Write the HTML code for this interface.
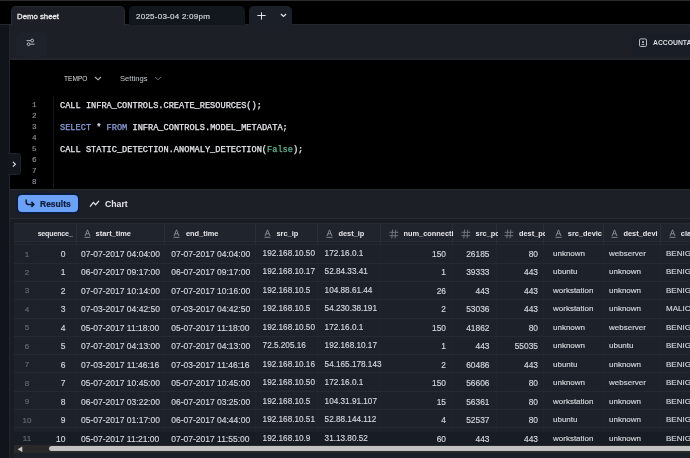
<!DOCTYPE html>
<html><head><meta charset="utf-8">
<style>
*{box-sizing:border-box;margin:0;padding:0}
html,body{width:690px;height:458px;overflow:hidden;background:#000;will-change:transform;font-family:"Liberation Sans",sans-serif;color:#d6d8dc;position:relative}
.a{position:absolute;white-space:pre}
.mono{font-family:"Liberation Mono",monospace}
.ln{position:absolute;left:24px;width:12.5px;text-align:right;font-size:7.6px;color:#8d929a;-webkit-text-stroke:0.15px currentColor;font-family:"Liberation Mono",monospace;line-height:11px}
.code{position:absolute;left:60px;font-size:8.65px;color:#e6e8ec;-webkit-text-stroke:0.25px currentColor;white-space:pre;font-family:"Liberation Mono",monospace;line-height:11px}
.kw{color:#8b9fdc}
.gr{color:#5fb896}
.hd{position:absolute;top:227.5px;font-size:7.4px;font-weight:bold;color:#e4e6ea;line-height:14px;white-space:pre}
.cell{position:absolute;white-space:pre;color:#d4d7dc;line-height:12px;-webkit-text-stroke:0.15px currentColor}
.rn{position:absolute;white-space:pre;color:#62676f;font-size:8px;line-height:12px;text-align:center;width:20px;left:17px;margin-top:0.5px;-webkit-text-stroke:0.2px currentColor}
.vsep{position:absolute;width:1px;background:#262a32}
.hsep{position:absolute;height:1px;left:14px;width:676px;background:#252931}
</style></head><body>

<div class="a" style="left:0;top:0;width:690px;height:1px;background:#2c2c2c"></div>
<div class="a" style="left:0;top:24px;width:690px;height:36px;background:#1c1f26;border-top:1px solid #24272e;border-bottom:2px solid #22252b"></div>
<div class="a" style="left:11px;top:6px;width:114px;height:20px;background:#1c1f26;border:1px solid #262a31;border-bottom:none;z-index:1;border-radius:5px 5px 0 0"></div>
<div class="a" style="left:17px;top:11px;font-size:7.8px;line-height:12px;color:#e9eaec;-webkit-text-stroke:0.3px #e9eaec;z-index:2">Demo sheet</div>
<div class="a" style="left:129px;top:6px;width:116px;height:19px;background:#12161d;border-radius:5px 5px 0 0"></div>
<div class="a" style="left:136px;top:10.7px;font-size:8px;letter-spacing:0.25px;line-height:12px;color:#d0d3d8;-webkit-text-stroke:0.2px currentColor">2025-03-04 2:09pm</div>
<div class="a" style="left:249px;top:6px;width:43px;height:18.5px;background:#1b1f27;border-radius:5px 5px 0 0"></div>
<svg class="a" style="left:257px;top:12px" width="9" height="8" viewBox="0 0 9 8"><path d="M4.5 0.3 V7.7 M0.3 3.5 H8.7" stroke="#e2e4e8" stroke-width="1"/></svg>
<svg class="a" style="left:279.5px;top:13px" width="7" height="5" viewBox="0 0 7 5"><path d="M0.9 1 L3.5 3.5 L6.1 1" stroke="#e2e4e8" stroke-width="1.2" fill="none"/></svg>
<div class="a" style="left:0;top:25px;width:10px;height:433px;background:#11151b;border-right:1px solid #20242b"></div>
<div class="a" style="left:16px;top:32px;width:31px;height:25px;background:#1d222b;border-radius:4px"></div>
<svg class="a" style="left:25px;top:38px" width="11" height="9" viewBox="0 0 11 9"><path d="M1.5 2.6 H5.8 M9.5 6.2 H5.2" stroke="#c8cbd0" stroke-width="0.9"/><circle cx="7.2" cy="2.6" r="1.4" stroke="#c8cbd0" stroke-width="0.9" fill="none"/><circle cx="3.6" cy="6.2" r="1.4" stroke="#c8cbd0" stroke-width="0.9" fill="none"/></svg>
<div class="a" style="left:631.5px;top:33px;width:70px;height:22.5px;background:#191d25;border-radius:5px"></div>
<svg class="a" style="left:639px;top:38px" width="8" height="9" viewBox="0 0 8 9"><rect x="0.5" y="0.9" width="7" height="7.6" rx="1.2" stroke="#c9ccd1" stroke-width="0.9" fill="none"/><circle cx="4" cy="3.9" r="1" fill="#c9ccd1"/><path d="M2.2 7 Q4 5.2 5.8 7 Z" fill="#c9ccd1"/></svg>
<div class="a" style="left:653px;top:37px;font-size:6.8px;font-weight:bold;line-height:12px;color:#d8dbe0">ACCOUNTADMIN</div>
<div class="a" style="left:10px;top:60px;width:680px;height:130px;background:#000"></div>
<div class="a" style="left:64px;top:73px;font-size:6.6px;line-height:12px;color:#dcdfe3">TEMPO</div>
<svg class="a" style="left:93.5px;top:76px" width="8" height="5" viewBox="0 0 8 5"><path d="M1 1 L4 3.8 L7 1" stroke="#b0b4bb" stroke-width="1.1" fill="none"/></svg>
<div class="a" style="left:120px;top:73px;font-size:7.6px;line-height:12px;color:#c4c8ce">Settings</div>
<svg class="a" style="left:153.5px;top:76px" width="8" height="5" viewBox="0 0 8 5"><path d="M1 1 L4 3.8 L7 1" stroke="#666c75" stroke-width="1" fill="none"/></svg>
<div class="a" style="left:52.5px;top:96px;width:1px;height:92px;background:#15171b"></div>
<div class="ln" style="top:100px">1</div>
<div class="ln" style="top:111px">2</div>
<div class="ln" style="top:122px">3</div>
<div class="ln" style="top:133px">4</div>
<div class="ln" style="top:144px">5</div>
<div class="ln" style="top:155px">6</div>
<div class="ln" style="top:166px">7</div>
<div class="ln" style="top:177px">8</div>
<div class="code" style="top:100.5px">CALL INFRA_CONTROLS.CREATE_RESOURCES();</div>
<div class="code" style="top:122.5px"><span class="kw">SELECT</span> * <span class="kw">FROM</span> INFRA_CONTROLS.MODEL_METADATA;</div>
<div class="code" style="top:144.5px">CALL STATIC_DETECTION.ANOMALY_DETECTION(<span class="gr">False</span>);</div>
<div class="a" style="left:8px;top:152.5px;width:12.5px;height:22px;background:#13161c;border:1px solid #20232a;border-left:none;border-radius:0 4px 4px 0"></div>
<svg class="a" style="left:12px;top:161px" width="5" height="7" viewBox="0 0 5 7"><path d="M0.9 0.9 L3.4 3.3 L0.9 5.7" stroke="#e0e2e6" stroke-width="1.1" fill="none"/></svg>
<div class="a" style="left:10px;top:189px;width:680px;height:30px;background:#1c1f26;border-top:1.5px solid #2a2c31;border-bottom:1.5px solid #292c32"></div>
<div class="a" style="left:16px;top:193px;width:63.5px;height:20.5px;background:#6ba2f8;border:2px solid #0c1c3c;border-radius:6px"></div>
<svg class="a" style="left:25px;top:199px" width="10" height="9" viewBox="0 0 10 9"><path d="M1.2 0.6 V3.2 Q1.2 5.4 3.4 5.4 H8.6 M6.4 2.9 L8.9 5.4 L6.4 7.9" stroke="#0b1a36" stroke-width="1.5" fill="none"/></svg>
<div class="a" style="left:40px;top:197.8px;font-size:8.5px;font-weight:bold;line-height:12px;color:#0d1b35;-webkit-text-stroke:0.2px currentColor">Results</div>
<svg class="a" style="left:89px;top:200px" width="11" height="8" viewBox="0 0 11 8"><path d="M1 6.6 L4.4 2.4 L6.6 4.8 L10 0.9" stroke="#dfe2e6" stroke-width="1.3" fill="none"/></svg>
<div class="a" style="left:105px;top:197.8px;font-size:8.7px;font-weight:bold;line-height:12px;color:#e3e5e9">Chart</div>
<div class="a" style="left:10px;top:220px;width:680px;height:238px;background:#1d212a"></div>
<div class="a" style="left:10px;top:219px;width:680px;height:3.5px;background:#191c23"></div>
<div class="a" style="left:14px;top:222.5px;width:676px;height:19.5px;background:#20242c;border-top:1px solid #262a31;border-bottom:1.5px solid #272b32"></div>
<div class="hsep" style="top:244.2px;background:#23272e"></div>
<div class="a" style="left:10px;top:220px;width:4px;height:238px;background:#191c22"></div>
<div class="vsep" style="left:37px;top:244px;height:201px;background:#1f232b"></div>
<div class="vsep" style="left:76px;top:223px;height:21px;background:#2a2e36"></div>
<div class="vsep" style="left:76px;top:244px;height:201px;background:#20242c"></div>
<div class="vsep" style="left:164px;top:223px;height:21px;background:#2a2e36"></div>
<div class="vsep" style="left:164px;top:244px;height:201px;background:#20242c"></div>
<div class="vsep" style="left:255px;top:223px;height:21px;background:#2a2e36"></div>
<div class="vsep" style="left:255px;top:244px;height:201px;background:#20242c"></div>
<div class="vsep" style="left:317px;top:223px;height:21px;background:#2a2e36"></div>
<div class="vsep" style="left:317px;top:244px;height:201px;background:#20242c"></div>
<div class="vsep" style="left:380px;top:223px;height:21px;background:#2a2e36"></div>
<div class="vsep" style="left:380px;top:244px;height:201px;background:#20242c"></div>
<div class="vsep" style="left:452px;top:223px;height:21px;background:#2a2e36"></div>
<div class="vsep" style="left:452px;top:244px;height:201px;background:#20242c"></div>
<div class="vsep" style="left:496px;top:223px;height:21px;background:#2a2e36"></div>
<div class="vsep" style="left:496px;top:244px;height:201px;background:#20242c"></div>
<div class="vsep" style="left:543px;top:223px;height:21px;background:#2a2e36"></div>
<div class="vsep" style="left:543px;top:244px;height:201px;background:#20242c"></div>
<div class="vsep" style="left:603px;top:223px;height:21px;background:#2a2e36"></div>
<div class="vsep" style="left:603px;top:244px;height:201px;background:#20242c"></div>
<div class="vsep" style="left:660px;top:223px;height:21px;background:#2a2e36"></div>
<div class="vsep" style="left:660px;top:244px;height:201px;background:#20242c"></div>
<div class="hsep" style="top:262.85px"></div>
<div class="hsep" style="top:281.10px"></div>
<div class="hsep" style="top:299.35px"></div>
<div class="hsep" style="top:317.60px"></div>
<div class="hsep" style="top:335.85px"></div>
<div class="hsep" style="top:354.10px"></div>
<div class="hsep" style="top:372.35px"></div>
<div class="hsep" style="top:390.60px"></div>
<div class="hsep" style="top:408.85px"></div>
<div class="hsep" style="top:427.10px"></div>
<div class="a" style="left:14px;top:431.5px;width:676px;height:13.5px;background:#181c25"></div>
<div class="a" style="left:37.5px;top:222px;width:37px;height:22px;overflow:hidden"><div class="hd" style="right:2px;top:5.3px;font-size:7.1px;letter-spacing:-0.2px">sequence_</div></div>
<svg width="7" height="9" viewBox="0 0 7 9" style="position:absolute;left:84px;top:229px"><path d="M3.5 0.8 L1 7 M3.5 0.8 L6 7 M2 4.8 L5 4.8" stroke="#8d929b" stroke-width="0.9" fill="none"/><path d="M0.5 8.3 H6.5" stroke="#8d929b" stroke-width="0.9"/></svg>
<div class="a" style="left:76px;top:222px;width:90px;height:22px;overflow:hidden"><div class="hd" style="left:19.60px;top:5.3px">start_time</div></div>
<svg width="7" height="9" viewBox="0 0 7 9" style="position:absolute;left:173.2px;top:229px"><path d="M3.5 0.8 L1 7 M3.5 0.8 L6 7 M2 4.8 L5 4.8" stroke="#8d929b" stroke-width="0.9" fill="none"/><path d="M0.5 8.3 H6.5" stroke="#8d929b" stroke-width="0.9"/></svg>
<div class="a" style="left:164px;top:222px;width:93px;height:22px;overflow:hidden"><div class="hd" style="left:22.00px;top:5.3px">end_time</div></div>
<svg width="7" height="9" viewBox="0 0 7 9" style="position:absolute;left:264px;top:229px"><path d="M3.5 0.8 L1 7 M3.5 0.8 L6 7 M2 4.8 L5 4.8" stroke="#8d929b" stroke-width="0.9" fill="none"/><path d="M0.5 8.3 H6.5" stroke="#8d929b" stroke-width="0.9"/></svg>
<div class="a" style="left:255px;top:222px;width:64px;height:22px;overflow:hidden"><div class="hd" style="left:21.50px;top:5.3px">src_ip</div></div>
<svg width="7" height="9" viewBox="0 0 7 9" style="position:absolute;left:325.5px;top:229px"><path d="M3.5 0.8 L1 7 M3.5 0.8 L6 7 M2 4.8 L5 4.8" stroke="#8d929b" stroke-width="0.9" fill="none"/><path d="M0.5 8.3 H6.5" stroke="#8d929b" stroke-width="0.9"/></svg>
<div class="a" style="left:317px;top:222px;width:65px;height:22px;overflow:hidden"><div class="hd" style="left:21.50px;top:5.3px">dest_ip</div></div>
<svg width="10" height="10" viewBox="0 0 10 10" style="position:absolute;left:389.2px;top:229px"><path d="M3.6 0.6 L2.8 9.4 M6.8 0.6 L6 9.4 M0.6 3.3 H9.4 M0.4 6.7 H9.2" stroke="#80858e" stroke-width="0.8" fill="none"/></svg>
<div class="a" style="left:380px;top:222px;width:74px;height:22px;overflow:hidden"><div class="hd" style="left:23.50px;top:5.3px">num_connecti</div></div>
<svg width="10" height="10" viewBox="0 0 10 10" style="position:absolute;left:460.6px;top:229px"><path d="M3.6 0.6 L2.8 9.4 M6.8 0.6 L6 9.4 M0.6 3.3 H9.4 M0.4 6.7 H9.2" stroke="#80858e" stroke-width="0.8" fill="none"/></svg>
<div class="a" style="left:452px;top:222px;width:46px;height:22px;overflow:hidden"><div class="hd" style="left:23.60px;top:5.3px">src_pc</div></div>
<svg width="10" height="10" viewBox="0 0 10 10" style="position:absolute;left:503.8px;top:229px"><path d="M3.6 0.6 L2.8 9.4 M6.8 0.6 L6 9.4 M0.6 3.3 H9.4 M0.4 6.7 H9.2" stroke="#80858e" stroke-width="0.8" fill="none"/></svg>
<div class="a" style="left:496px;top:222px;width:49px;height:22px;overflow:hidden"><div class="hd" style="left:23.00px;top:5.3px">dest_pc</div></div>
<svg width="7" height="9" viewBox="0 0 7 9" style="position:absolute;left:555px;top:229px"><path d="M3.5 0.8 L1 7 M3.5 0.8 L6 7 M2 4.8 L5 4.8" stroke="#8d929b" stroke-width="0.9" fill="none"/><path d="M0.5 8.3 H6.5" stroke="#8d929b" stroke-width="0.9"/></svg>
<div class="a" style="left:543px;top:222px;width:62px;height:22px;overflow:hidden"><div class="hd" style="left:24.80px;top:5.3px">src_devic</div></div>
<svg width="7" height="9" viewBox="0 0 7 9" style="position:absolute;left:611px;top:229px"><path d="M3.5 0.8 L1 7 M3.5 0.8 L6 7 M2 4.8 L5 4.8" stroke="#8d929b" stroke-width="0.9" fill="none"/><path d="M0.5 8.3 H6.5" stroke="#8d929b" stroke-width="0.9"/></svg>
<div class="a" style="left:603px;top:222px;width:59px;height:22px;overflow:hidden"><div class="hd" style="left:20.50px;top:5.3px">dest_devi</div></div>
<svg width="7" height="9" viewBox="0 0 7 9" style="position:absolute;left:668.7px;top:229px"><path d="M3.5 0.8 L1 7 M3.5 0.8 L6 7 M2 4.8 L5 4.8" stroke="#8d929b" stroke-width="0.9" fill="none"/><path d="M0.5 8.3 H6.5" stroke="#8d929b" stroke-width="0.9"/></svg>
<div class="a" style="left:660px;top:222px;width:32px;height:22px;overflow:hidden"><div class="hd" style="left:20.80px;top:5.3px">class</div></div>
<div class="rn" style="top:248.03px">1</div>
<div class="cell" style="right:624.5px;top:248.03px;font-size:8.5px;text-align:right">0</div>
<div class="a" style="left:76px;top:248.03px;width:90px;height:12px;overflow:hidden"><div class="cell" style="left:5.00px;top:0;font-size:8.5px">07-07-2017 04:04:00</div></div>
<div class="a" style="left:164px;top:248.03px;width:93px;height:12px;overflow:hidden"><div class="cell" style="left:7.20px;top:0;font-size:8.5px">07-07-2017 04:04:00</div></div>
<div class="a" style="left:255px;top:248.03px;width:64px;height:12px;overflow:hidden"><div class="cell" style="left:7.60px;top:0;font-size:8.2px">192.168.10.50</div></div>
<div class="a" style="left:317px;top:248.03px;width:65px;height:12px;overflow:hidden"><div class="cell" style="left:7.60px;top:0;font-size:8.2px">172.16.0.1</div></div>
<div class="cell" style="right:244px;top:248.03px;font-size:8.4px;text-align:right">150</div>
<div class="cell" style="right:200.5px;top:248.03px;font-size:8.4px;text-align:right">26185</div>
<div class="cell" style="right:152px;top:248.03px;font-size:8.4px;text-align:right">80</div>
<div class="a" style="left:543px;top:248.03px;width:62px;height:12px;overflow:hidden"><div class="cell" style="left:10.00px;top:0;font-size:8.0px">unknown</div></div>
<div class="a" style="left:603px;top:248.03px;width:59px;height:12px;overflow:hidden"><div class="cell" style="left:6.00px;top:0;font-size:8.0px">webserver</div></div>
<div class="a" style="left:660px;top:248.03px;width:30px;height:12px;overflow:hidden"><div class="cell" style="left:6.00px;top:0;font-size:8.0px">BENIGN</div></div>
<div class="rn" style="top:266.49px">2</div>
<div class="cell" style="right:624.5px;top:266.49px;font-size:8.5px;text-align:right">1</div>
<div class="a" style="left:76px;top:266.49px;width:90px;height:12px;overflow:hidden"><div class="cell" style="left:5.00px;top:0;font-size:8.5px">06-07-2017 09:17:00</div></div>
<div class="a" style="left:164px;top:266.49px;width:93px;height:12px;overflow:hidden"><div class="cell" style="left:7.20px;top:0;font-size:8.5px">06-07-2017 09:17:00</div></div>
<div class="a" style="left:255px;top:266.49px;width:64px;height:12px;overflow:hidden"><div class="cell" style="left:7.60px;top:0;font-size:8.2px">192.168.10.17</div></div>
<div class="a" style="left:317px;top:266.49px;width:65px;height:12px;overflow:hidden"><div class="cell" style="left:7.60px;top:0;font-size:8.2px">52.84.33.41</div></div>
<div class="cell" style="right:244px;top:266.49px;font-size:8.4px;text-align:right">1</div>
<div class="cell" style="right:200.5px;top:266.49px;font-size:8.4px;text-align:right">39333</div>
<div class="cell" style="right:152px;top:266.49px;font-size:8.4px;text-align:right">443</div>
<div class="a" style="left:543px;top:266.49px;width:62px;height:12px;overflow:hidden"><div class="cell" style="left:10.00px;top:0;font-size:8.0px">ubuntu</div></div>
<div class="a" style="left:603px;top:266.49px;width:59px;height:12px;overflow:hidden"><div class="cell" style="left:6.00px;top:0;font-size:8.0px">unknown</div></div>
<div class="a" style="left:660px;top:266.49px;width:30px;height:12px;overflow:hidden"><div class="cell" style="left:6.00px;top:0;font-size:8.0px">BENIGN</div></div>
<div class="rn" style="top:284.95px">3</div>
<div class="cell" style="right:624.5px;top:284.95px;font-size:8.5px;text-align:right">2</div>
<div class="a" style="left:76px;top:284.95px;width:90px;height:12px;overflow:hidden"><div class="cell" style="left:5.00px;top:0;font-size:8.5px">07-07-2017 10:14:00</div></div>
<div class="a" style="left:164px;top:284.95px;width:93px;height:12px;overflow:hidden"><div class="cell" style="left:7.20px;top:0;font-size:8.5px">07-07-2017 10:16:00</div></div>
<div class="a" style="left:255px;top:284.95px;width:64px;height:12px;overflow:hidden"><div class="cell" style="left:7.60px;top:0;font-size:8.2px">192.168.10.5</div></div>
<div class="a" style="left:317px;top:284.95px;width:65px;height:12px;overflow:hidden"><div class="cell" style="left:7.60px;top:0;font-size:8.2px">104.88.61.44</div></div>
<div class="cell" style="right:244px;top:284.95px;font-size:8.4px;text-align:right">26</div>
<div class="cell" style="right:200.5px;top:284.95px;font-size:8.4px;text-align:right">443</div>
<div class="cell" style="right:152px;top:284.95px;font-size:8.4px;text-align:right">443</div>
<div class="a" style="left:543px;top:284.95px;width:62px;height:12px;overflow:hidden"><div class="cell" style="left:10.00px;top:0;font-size:8.0px">workstation</div></div>
<div class="a" style="left:603px;top:284.95px;width:59px;height:12px;overflow:hidden"><div class="cell" style="left:6.00px;top:0;font-size:8.0px">unknown</div></div>
<div class="a" style="left:660px;top:284.95px;width:30px;height:12px;overflow:hidden"><div class="cell" style="left:6.00px;top:0;font-size:8.0px">BENIGN</div></div>
<div class="rn" style="top:303.41px">4</div>
<div class="cell" style="right:624.5px;top:303.41px;font-size:8.5px;text-align:right">3</div>
<div class="a" style="left:76px;top:303.41px;width:90px;height:12px;overflow:hidden"><div class="cell" style="left:5.00px;top:0;font-size:8.5px">07-03-2017 04:42:50</div></div>
<div class="a" style="left:164px;top:303.41px;width:93px;height:12px;overflow:hidden"><div class="cell" style="left:7.20px;top:0;font-size:8.5px">07-03-2017 04:42:50</div></div>
<div class="a" style="left:255px;top:303.41px;width:64px;height:12px;overflow:hidden"><div class="cell" style="left:7.60px;top:0;font-size:8.2px">192.168.10.5</div></div>
<div class="a" style="left:317px;top:303.41px;width:65px;height:12px;overflow:hidden"><div class="cell" style="left:7.60px;top:0;font-size:8.2px">54.230.38.191</div></div>
<div class="cell" style="right:244px;top:303.41px;font-size:8.4px;text-align:right">2</div>
<div class="cell" style="right:200.5px;top:303.41px;font-size:8.4px;text-align:right">53036</div>
<div class="cell" style="right:152px;top:303.41px;font-size:8.4px;text-align:right">443</div>
<div class="a" style="left:543px;top:303.41px;width:62px;height:12px;overflow:hidden"><div class="cell" style="left:10.00px;top:0;font-size:8.0px">workstation</div></div>
<div class="a" style="left:603px;top:303.41px;width:59px;height:12px;overflow:hidden"><div class="cell" style="left:6.00px;top:0;font-size:8.0px">unknown</div></div>
<div class="a" style="left:660px;top:303.41px;width:30px;height:12px;overflow:hidden"><div class="cell" style="left:6.00px;top:0;font-size:8.0px">MALICIOUS</div></div>
<div class="rn" style="top:321.87px">5</div>
<div class="cell" style="right:624.5px;top:321.87px;font-size:8.5px;text-align:right">4</div>
<div class="a" style="left:76px;top:321.87px;width:90px;height:12px;overflow:hidden"><div class="cell" style="left:5.00px;top:0;font-size:8.5px">05-07-2017 11:18:00</div></div>
<div class="a" style="left:164px;top:321.87px;width:93px;height:12px;overflow:hidden"><div class="cell" style="left:7.20px;top:0;font-size:8.5px">05-07-2017 11:18:00</div></div>
<div class="a" style="left:255px;top:321.87px;width:64px;height:12px;overflow:hidden"><div class="cell" style="left:7.60px;top:0;font-size:8.2px">192.168.10.50</div></div>
<div class="a" style="left:317px;top:321.87px;width:65px;height:12px;overflow:hidden"><div class="cell" style="left:7.60px;top:0;font-size:8.2px">172.16.0.1</div></div>
<div class="cell" style="right:244px;top:321.87px;font-size:8.4px;text-align:right">150</div>
<div class="cell" style="right:200.5px;top:321.87px;font-size:8.4px;text-align:right">41862</div>
<div class="cell" style="right:152px;top:321.87px;font-size:8.4px;text-align:right">80</div>
<div class="a" style="left:543px;top:321.87px;width:62px;height:12px;overflow:hidden"><div class="cell" style="left:10.00px;top:0;font-size:8.0px">unknown</div></div>
<div class="a" style="left:603px;top:321.87px;width:59px;height:12px;overflow:hidden"><div class="cell" style="left:6.00px;top:0;font-size:8.0px">webserver</div></div>
<div class="a" style="left:660px;top:321.87px;width:30px;height:12px;overflow:hidden"><div class="cell" style="left:6.00px;top:0;font-size:8.0px">BENIGN</div></div>
<div class="rn" style="top:340.33px">6</div>
<div class="cell" style="right:624.5px;top:340.33px;font-size:8.5px;text-align:right">5</div>
<div class="a" style="left:76px;top:340.33px;width:90px;height:12px;overflow:hidden"><div class="cell" style="left:5.00px;top:0;font-size:8.5px">07-07-2017 04:13:00</div></div>
<div class="a" style="left:164px;top:340.33px;width:93px;height:12px;overflow:hidden"><div class="cell" style="left:7.20px;top:0;font-size:8.5px">07-07-2017 04:13:00</div></div>
<div class="a" style="left:255px;top:340.33px;width:64px;height:12px;overflow:hidden"><div class="cell" style="left:7.60px;top:0;font-size:8.2px">72.5.205.16</div></div>
<div class="a" style="left:317px;top:340.33px;width:65px;height:12px;overflow:hidden"><div class="cell" style="left:7.60px;top:0;font-size:8.2px">192.168.10.17</div></div>
<div class="cell" style="right:244px;top:340.33px;font-size:8.4px;text-align:right">1</div>
<div class="cell" style="right:200.5px;top:340.33px;font-size:8.4px;text-align:right">443</div>
<div class="cell" style="right:152px;top:340.33px;font-size:8.4px;text-align:right">55035</div>
<div class="a" style="left:543px;top:340.33px;width:62px;height:12px;overflow:hidden"><div class="cell" style="left:10.00px;top:0;font-size:8.0px">unknown</div></div>
<div class="a" style="left:603px;top:340.33px;width:59px;height:12px;overflow:hidden"><div class="cell" style="left:6.00px;top:0;font-size:8.0px">ubuntu</div></div>
<div class="a" style="left:660px;top:340.33px;width:30px;height:12px;overflow:hidden"><div class="cell" style="left:6.00px;top:0;font-size:8.0px">BENIGN</div></div>
<div class="rn" style="top:358.79px">7</div>
<div class="cell" style="right:624.5px;top:358.79px;font-size:8.5px;text-align:right">6</div>
<div class="a" style="left:76px;top:358.79px;width:90px;height:12px;overflow:hidden"><div class="cell" style="left:5.00px;top:0;font-size:8.5px">07-03-2017 11:46:16</div></div>
<div class="a" style="left:164px;top:358.79px;width:93px;height:12px;overflow:hidden"><div class="cell" style="left:7.20px;top:0;font-size:8.5px">07-03-2017 11:46:16</div></div>
<div class="a" style="left:255px;top:358.79px;width:64px;height:12px;overflow:hidden"><div class="cell" style="left:7.60px;top:0;font-size:8.2px">192.168.10.16</div></div>
<div class="a" style="left:317px;top:358.79px;width:65px;height:12px;overflow:hidden"><div class="cell" style="left:7.60px;top:0;font-size:8.2px">54.165.178.143</div></div>
<div class="cell" style="right:244px;top:358.79px;font-size:8.4px;text-align:right">2</div>
<div class="cell" style="right:200.5px;top:358.79px;font-size:8.4px;text-align:right">60486</div>
<div class="cell" style="right:152px;top:358.79px;font-size:8.4px;text-align:right">443</div>
<div class="a" style="left:543px;top:358.79px;width:62px;height:12px;overflow:hidden"><div class="cell" style="left:10.00px;top:0;font-size:8.0px">ubuntu</div></div>
<div class="a" style="left:603px;top:358.79px;width:59px;height:12px;overflow:hidden"><div class="cell" style="left:6.00px;top:0;font-size:8.0px">unknown</div></div>
<div class="a" style="left:660px;top:358.79px;width:30px;height:12px;overflow:hidden"><div class="cell" style="left:6.00px;top:0;font-size:8.0px">BENIGN</div></div>
<div class="rn" style="top:377.25px">8</div>
<div class="cell" style="right:624.5px;top:377.25px;font-size:8.5px;text-align:right">7</div>
<div class="a" style="left:76px;top:377.25px;width:90px;height:12px;overflow:hidden"><div class="cell" style="left:5.00px;top:0;font-size:8.5px">05-07-2017 10:45:00</div></div>
<div class="a" style="left:164px;top:377.25px;width:93px;height:12px;overflow:hidden"><div class="cell" style="left:7.20px;top:0;font-size:8.5px">05-07-2017 10:45:00</div></div>
<div class="a" style="left:255px;top:377.25px;width:64px;height:12px;overflow:hidden"><div class="cell" style="left:7.60px;top:0;font-size:8.2px">192.168.10.50</div></div>
<div class="a" style="left:317px;top:377.25px;width:65px;height:12px;overflow:hidden"><div class="cell" style="left:7.60px;top:0;font-size:8.2px">172.16.0.1</div></div>
<div class="cell" style="right:244px;top:377.25px;font-size:8.4px;text-align:right">150</div>
<div class="cell" style="right:200.5px;top:377.25px;font-size:8.4px;text-align:right">56606</div>
<div class="cell" style="right:152px;top:377.25px;font-size:8.4px;text-align:right">80</div>
<div class="a" style="left:543px;top:377.25px;width:62px;height:12px;overflow:hidden"><div class="cell" style="left:10.00px;top:0;font-size:8.0px">unknown</div></div>
<div class="a" style="left:603px;top:377.25px;width:59px;height:12px;overflow:hidden"><div class="cell" style="left:6.00px;top:0;font-size:8.0px">webserver</div></div>
<div class="a" style="left:660px;top:377.25px;width:30px;height:12px;overflow:hidden"><div class="cell" style="left:6.00px;top:0;font-size:8.0px">BENIGN</div></div>
<div class="rn" style="top:395.71px">9</div>
<div class="cell" style="right:624.5px;top:395.71px;font-size:8.5px;text-align:right">8</div>
<div class="a" style="left:76px;top:395.71px;width:90px;height:12px;overflow:hidden"><div class="cell" style="left:5.00px;top:0;font-size:8.5px">06-07-2017 03:22:00</div></div>
<div class="a" style="left:164px;top:395.71px;width:93px;height:12px;overflow:hidden"><div class="cell" style="left:7.20px;top:0;font-size:8.5px">06-07-2017 03:25:00</div></div>
<div class="a" style="left:255px;top:395.71px;width:64px;height:12px;overflow:hidden"><div class="cell" style="left:7.60px;top:0;font-size:8.2px">192.168.10.5</div></div>
<div class="a" style="left:317px;top:395.71px;width:65px;height:12px;overflow:hidden"><div class="cell" style="left:7.60px;top:0;font-size:8.2px">104.31.91.107</div></div>
<div class="cell" style="right:244px;top:395.71px;font-size:8.4px;text-align:right">15</div>
<div class="cell" style="right:200.5px;top:395.71px;font-size:8.4px;text-align:right">56361</div>
<div class="cell" style="right:152px;top:395.71px;font-size:8.4px;text-align:right">80</div>
<div class="a" style="left:543px;top:395.71px;width:62px;height:12px;overflow:hidden"><div class="cell" style="left:10.00px;top:0;font-size:8.0px">workstation</div></div>
<div class="a" style="left:603px;top:395.71px;width:59px;height:12px;overflow:hidden"><div class="cell" style="left:6.00px;top:0;font-size:8.0px">unknown</div></div>
<div class="a" style="left:660px;top:395.71px;width:30px;height:12px;overflow:hidden"><div class="cell" style="left:6.00px;top:0;font-size:8.0px">BENIGN</div></div>
<div class="rn" style="top:414.17px">10</div>
<div class="cell" style="right:624.5px;top:414.17px;font-size:8.5px;text-align:right">9</div>
<div class="a" style="left:76px;top:414.17px;width:90px;height:12px;overflow:hidden"><div class="cell" style="left:5.00px;top:0;font-size:8.5px">05-07-2017 01:17:00</div></div>
<div class="a" style="left:164px;top:414.17px;width:93px;height:12px;overflow:hidden"><div class="cell" style="left:7.20px;top:0;font-size:8.5px">06-07-2017 04:44:00</div></div>
<div class="a" style="left:255px;top:414.17px;width:64px;height:12px;overflow:hidden"><div class="cell" style="left:7.60px;top:0;font-size:8.2px">192.168.10.51</div></div>
<div class="a" style="left:317px;top:414.17px;width:65px;height:12px;overflow:hidden"><div class="cell" style="left:7.60px;top:0;font-size:8.2px">52.88.144.112</div></div>
<div class="cell" style="right:244px;top:414.17px;font-size:8.4px;text-align:right">4</div>
<div class="cell" style="right:200.5px;top:414.17px;font-size:8.4px;text-align:right">52537</div>
<div class="cell" style="right:152px;top:414.17px;font-size:8.4px;text-align:right">80</div>
<div class="a" style="left:543px;top:414.17px;width:62px;height:12px;overflow:hidden"><div class="cell" style="left:10.00px;top:0;font-size:8.0px">ubuntu</div></div>
<div class="a" style="left:603px;top:414.17px;width:59px;height:12px;overflow:hidden"><div class="cell" style="left:6.00px;top:0;font-size:8.0px">unknown</div></div>
<div class="a" style="left:660px;top:414.17px;width:30px;height:12px;overflow:hidden"><div class="cell" style="left:6.00px;top:0;font-size:8.0px">BENIGN</div></div>
<div class="rn" style="top:432.63px">11</div>
<div class="cell" style="right:624.5px;top:432.63px;font-size:8.5px;text-align:right">10</div>
<div class="a" style="left:76px;top:432.63px;width:90px;height:12px;overflow:hidden"><div class="cell" style="left:5.00px;top:0;font-size:8.5px">05-07-2017 11:21:00</div></div>
<div class="a" style="left:164px;top:432.63px;width:93px;height:12px;overflow:hidden"><div class="cell" style="left:7.20px;top:0;font-size:8.5px">07-07-2017 11:55:00</div></div>
<div class="a" style="left:255px;top:432.63px;width:64px;height:12px;overflow:hidden"><div class="cell" style="left:7.60px;top:0;font-size:8.2px">192.168.10.9</div></div>
<div class="a" style="left:317px;top:432.63px;width:65px;height:12px;overflow:hidden"><div class="cell" style="left:7.60px;top:0;font-size:8.2px">31.13.80.52</div></div>
<div class="cell" style="right:244px;top:432.63px;font-size:8.4px;text-align:right">60</div>
<div class="cell" style="right:200.5px;top:432.63px;font-size:8.4px;text-align:right">443</div>
<div class="cell" style="right:152px;top:432.63px;font-size:8.4px;text-align:right">443</div>
<div class="a" style="left:543px;top:432.63px;width:62px;height:12px;overflow:hidden"><div class="cell" style="left:10.00px;top:0;font-size:8.0px">workstation</div></div>
<div class="a" style="left:603px;top:432.63px;width:59px;height:12px;overflow:hidden"><div class="cell" style="left:6.00px;top:0;font-size:8.0px">unknown</div></div>
<div class="a" style="left:660px;top:432.63px;width:30px;height:12px;overflow:hidden"><div class="cell" style="left:6.00px;top:0;font-size:8.0px">BENIGN</div></div>
<div class="a" style="left:14px;top:444.5px;width:676px;height:8px;background:#2a2a28"></div>
<div class="a" style="left:49px;top:446px;width:660px;height:5.2px;background:#c2c2c0;border-radius:3px"></div>
<svg class="a" style="left:17px;top:445.5px" width="6" height="7" viewBox="0 0 6 7"><path d="M5.3 0.5 L0.6 3.3 L5.3 6.1 Z" fill="#c9cbce"/></svg>
<div class="a" style="left:14px;top:452.5px;width:676px;height:6px;background:#1c2029"></div>
</body></html>
